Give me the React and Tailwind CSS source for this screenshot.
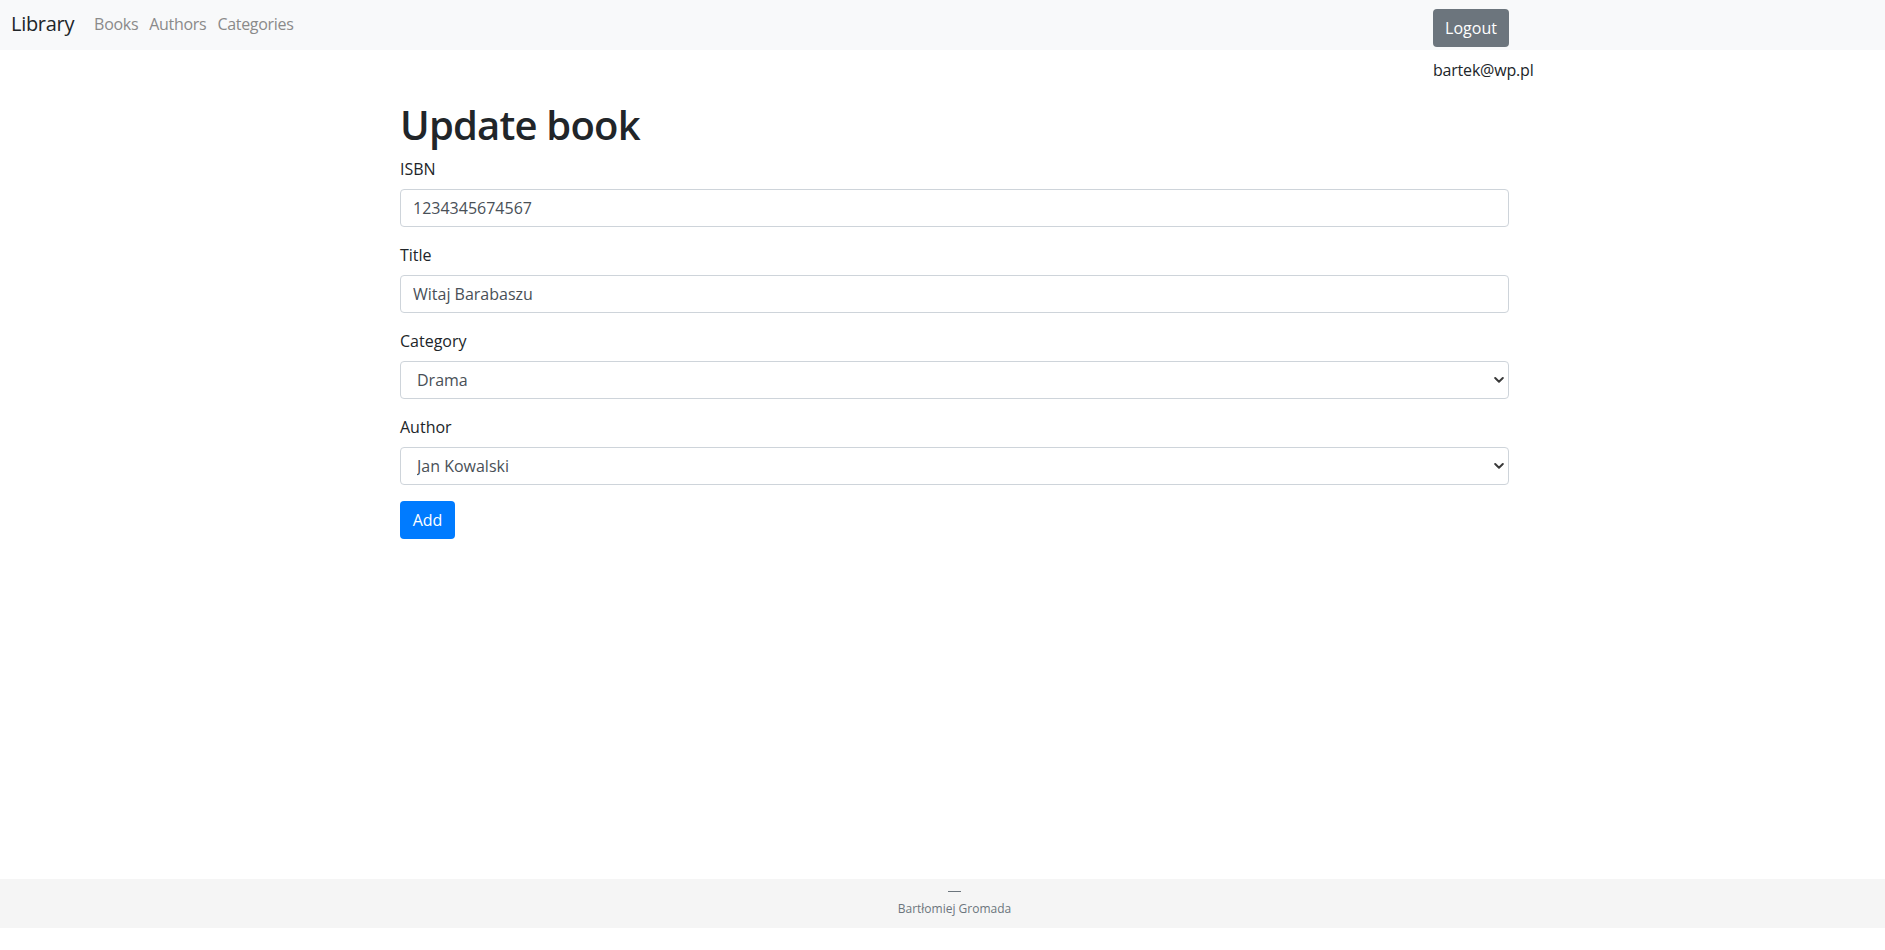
import { useState } from 'react';

const font = { fontFamily: '"Open Sans", "Noto Sans", sans-serif' };

const categories = ['Drama', 'Komedia', 'Fantastyka', 'Kryminał'];
const authors = ['Jan Kowalski', 'Adam Nowak', 'Anna Wiśniewska'];

function Chevron() {
  return (
    <svg className="pointer-events-none absolute right-[5px] top-1/2 -translate-y-1/2" width="10" height="7" viewBox="0 0 10 7" fill="none">
      <path d="M1.2 1.5 L5 5.2 L8.8 1.5" stroke="#3a3a3a" strokeWidth="2" strokeLinecap="round" strokeLinejoin="round" />
    </svg>
  );
}

function Field({ label, children }) {
  return (
    <div className="mb-4">
      <label className="block mb-2 leading-6 text-base text-[#212529]">{label}</label>
      {children}
    </div>
  );
}

function Navbar() {
  return (
    <nav className="h-[50px] bg-[#f8f9fa] flex items-start pt-[9px] pl-[11px] pr-[376px]">
      <a className="text-[20px] leading-[30px] text-[#212529] tracking-[-0.3px] mr-[20px]">Library</a>
      <ul className="flex gap-[11px] mt-[3px]">
        {['Books', 'Authors', 'Categories'].map(l => (
          <li key={l} className="text-base leading-6 text-[#8a8a8a] tracking-[-0.3px]">{l}</li>
        ))}
      </ul>
      <button className="ml-auto w-[76px] h-[38px] rounded bg-[#6c757d] text-white text-base">Logout</button>
    </nav>
  );
}

export default function App() {
  const [isbn, setIsbn] = useState('1234345674567');
  const [title, setTitle] = useState('Witaj Barabaszu');
  const [category, setCategory] = useState('Drama');
  const [author, setAuthor] = useState('Jan Kowalski');

  const inputCls = 'block w-full h-[38px] px-3 border border-[#ced4da] rounded bg-white text-base text-[#495057] outline-none';

  return (
    <div className="h-[950px] flex flex-col bg-white" style={font}>
      <Navbar />
      <div className="flex justify-end pr-[376px] pt-[8px]">
        <div className="w-[76px] whitespace-nowrap text-base leading-6 text-[#212529] tracking-[-0.2px]">bartek@wp.pl</div>
      </div>
      <main className="flex-1 pl-[400px] pr-[376px] pt-[19px]">
        <h1 className="text-[40px] leading-[48px] font-semibold tracking-[-0.8px] text-[#212529] mb-2">Update book</h1>
        <form onSubmit={e => e.preventDefault()}>
          <Field label="ISBN">
            <input className={inputCls} value={isbn} onChange={e => setIsbn(e.target.value)} />
          </Field>
          <Field label="Title">
            <input className={inputCls} value={title} onChange={e => setTitle(e.target.value)} />
          </Field>
          <Field label="Category">
            <div className="relative">
              <select className={inputCls + ' appearance-none pl-[16px]'} value={category} onChange={e => setCategory(e.target.value)}>
                {categories.map(c => <option key={c}>{c}</option>)}
              </select>
              <Chevron />
            </div>
          </Field>
          <Field label="Author">
            <div className="relative">
              <select className={inputCls + ' appearance-none pl-[16px]'} value={author} onChange={e => setAuthor(e.target.value)}>
                {authors.map(a => <option key={a}>{a}</option>)}
              </select>
              <Chevron />
            </div>
          </Field>
          <button type="submit" className="w-[55px] h-[38px] rounded bg-[#007bff] text-white text-base">Add</button>
        </form>
      </main>
      <footer className="h-[49px] mb-[22px] bg-[#f5f5f5] flex flex-col items-center justify-center pl-[24px]">
        <div className="w-[13px] h-px bg-[#6c757d] mb-[9px]" />
        <div className="text-[12px] leading-4 text-[#6c757d]">Bartłomiej Gromada</div>
      </footer>
    </div>
  );
}
